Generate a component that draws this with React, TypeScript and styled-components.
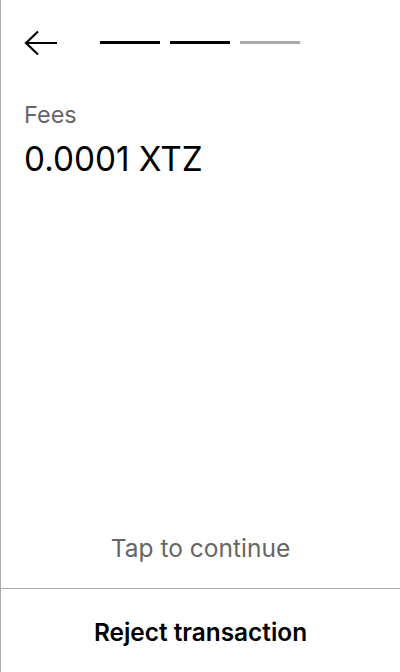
import React from "react";
import styled, { createGlobalStyle } from "styled-components";

const Global = createGlobalStyle`
  html, body { margin: 0; padding: 0; background: #fff; }
  body { font-family: Inter, "Noto Sans", sans-serif; }
  * { box-sizing: border-box; }
`;

const Screen = styled.div`
  width: 400px;
  height: 672px;
  display: flex;
  flex-direction: column;
  border-left: 1px solid #aaaaaa;
  background: #fff;
  color: #000;
`;

const Header = styled.div`
  display: flex;
  align-items: flex-start;
  gap: 42px;
  padding: 30px 0 0 23px;
  height: 86px;
`;

const BackButton = styled.button`
  border: 0;
  background: none;
  padding: 0;
  width: 34px;
  height: 28px;
  display: flex;
  cursor: pointer;
`;

const Steps = styled.div`
  display: flex;
  gap: 10px;
  padding-top: 11px;
`;

const Step = styled.div<{ $done: boolean }>`
  width: 60px;
  height: 3px;
  background: ${(p) => (p.$done ? "#000" : "#aaaaaa")};
`;

const Content = styled.div`
  flex: 1;
  padding: 13px 23px 0;
  display: flex;
  flex-direction: column;
`;

const Label = styled.div`
  font-size: 23.5px;
  line-height: 32px;
  color: #666666;
`;

const Value = styled.div`
  font-size: 33.3px;
  line-height: 40px;
  margin-top: 8px;
  color: #000;
`;

const Hint = styled.div`
  text-align: center;
  font-size: 24.5px;
  line-height: 32px;
  color: #666666;
  padding-bottom: 24px;
`;

const Footer = styled.button`
  height: 84px;
  border: 0;
  border-top: 1px solid #aaaaaa;
  background: #fff;
  font-family: Inter, "Noto Sans", sans-serif;
  font-size: 24.4px;
  font-weight: 600;
  color: #000;
  cursor: pointer;
  padding: 2px 0 0;
`;

export default function App() {
  return (
    <>
      <Global />
      <Screen>
        <Header>
          <BackButton aria-label="Back">
            <svg width="34" height="28" viewBox="0 0 34 28" fill="none">
              <path d="M33 13H2.5M14 1.5L2 13l12 11.5" stroke="#000" strokeWidth="2.2" />
            </svg>
          </BackButton>
          <Steps>
            <Step $done />
            <Step $done />
            <Step $done={false} />
          </Steps>
        </Header>
        <Content>
          <Label>Fees</Label>
          <Value>0.0001 XTZ</Value>
        </Content>
        <Hint>Tap to continue</Hint>
        <Footer>Reject transaction</Footer>
      </Screen>
    </>
  );
}
